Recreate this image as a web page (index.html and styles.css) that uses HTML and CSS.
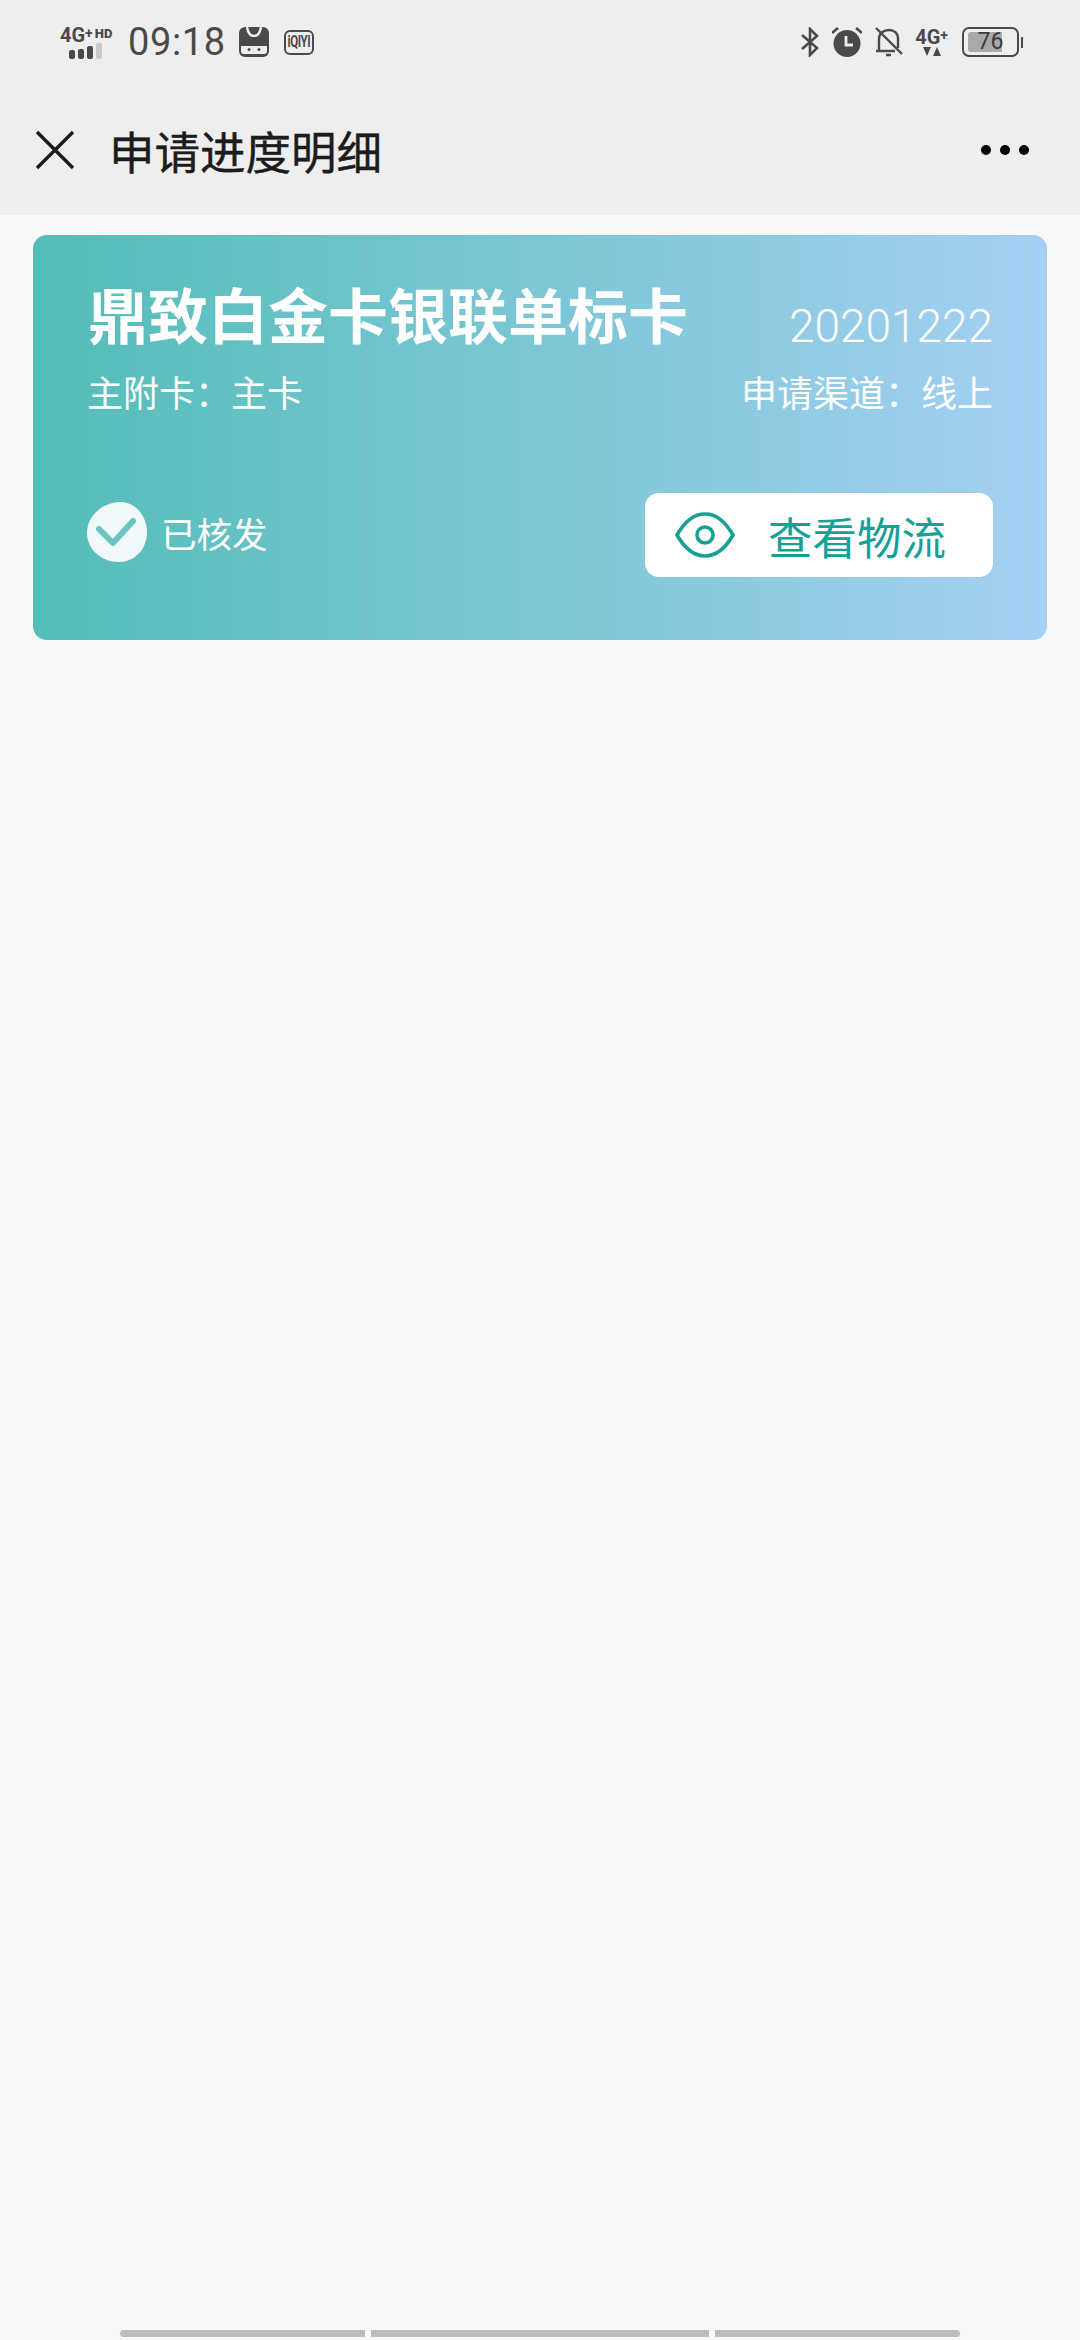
FILE: index.html
```html
<!DOCTYPE html>
<html lang="zh-CN">
<head>
    <meta charset="UTF-8">
    <meta name="viewport" content="width=device-width, initial-scale=1.0">
    <title>申请进度明细</title>
    <link rel="stylesheet" href="styles.css">
</head>
<body>
    <div class="page">
        <!-- 顶部 -->
        <div class="top-bar">
            <div class="status-bar">
                <div class="status-left">
                    <div class="signal">
                        <div class="net-text">4G<sup>+</sup><b>HD</b></div>
                        <div class="bars"><i></i><i></i><i></i><i class="off"></i></div>
                    </div>
                    <span class="clock">09:18</span>
                    <svg class="tmall" width="30" height="30" viewBox="0 0 30 30">
                        <rect width="30" height="30" rx="6" fill="#4a4a4a"/>
                        <path d="M8 0 C9 6 12 9 15 9 C18 9 21 6 22 0" fill="none" stroke="#eee" stroke-width="2.4"/>
                        <path d="M2 13 L7 16 L23 16 L28 13 L28 24 Q28 27 25 27 L5 27 Q2 27 2 24 Z" fill="#eee"/>
                        <rect x="0" y="10" width="30" height="9" fill="#4a4a4a"/>
                        <rect x="3" y="19" width="24" height="7" rx="2" fill="#eee"/>
                        <circle cx="10" cy="22.5" r="1.5" fill="#4a4a4a"/>
                        <circle cx="20" cy="22.5" r="1.5" fill="#4a4a4a"/>
                    </svg>
                    <div class="iqiyi"><span>iQIYI</span></div>
                </div>
                <div class="status-right">
                    <svg class="ic-bt" width="20" height="30" viewBox="0 0 20 30" fill="none" stroke="#4a4a4a" stroke-width="2.6">
                        <path d="M2 8 L17 21 L10 28 L10 2 L17 9 L2 22"/>
                    </svg>
                    <svg class="ic-alarm" width="30" height="30" viewBox="0 0 30 30">
                        <circle cx="15" cy="16.5" r="13.5" fill="#4a4a4a"/>
                        <path d="M14 9 V18 H21" fill="none" stroke="#eee" stroke-width="2.8"/>
                        <path d="M0 6 L6 1 M30 6 L24 1" stroke="#4a4a4a" stroke-width="2.6"/>
                    </svg>
                    <svg class="ic-bell" width="28" height="30" viewBox="0 0 28 30" fill="none" stroke="#4a4a4a" stroke-width="2.4">
                        <path d="M4 23 V12 C4 6 9 3 14 3 C19 3 23 6 23 12 V21"/>
                        <path d="M1 24 H20 M11 28 H16 M1 1 L27 27"/>
                    </svg>
                    <div class="net-small">
                        <div>4G<sup>+</sup></div>
                        <svg width="18" height="9" viewBox="0 0 18 9" fill="#4a4a4a"><path d="M0 0 H8 L4 9 Z M10 9 H18 L14 0 Z"/></svg>
                    </div>
                    <div class="battery">
                        <div class="battery-body">
                            <div class="battery-level" style="width: 76%"></div>
                            <span>76</span>
                        </div>
                        <div class="battery-cap"></div>
                    </div>
                </div>
            </div>
            <div class="nav-bar">
                <svg class="close-icon" width="40" height="40" viewBox="0 0 40 40" fill="none" stroke="#1c1c1c" stroke-width="3.4">
                    <path d="M2 2 L38 38 M38 2 L2 38"/>
                </svg>
                <h1>申请进度明细</h1>
                <div class="more"><i></i><i></i><i></i></div>
            </div>
        </div>

        <!-- 卡片 -->
        <div class="card">
            <div class="card-row card-title-row">
                <h2>鼎致白金卡银联单标卡</h2>
                <span class="card-date">20201222</span>
            </div>
            <div class="card-row card-sub">
                <span>主附卡：主卡</span>
                <span>申请渠道：线上</span>
            </div>
            <div class="card-row card-bottom">
                <div class="card-status">
                    <svg width="60" height="60" viewBox="0 0 60 60">
                        <path d="M32 0 C47 -1 60 13 60 30 C60 48 47 60 32 60 C14 60 0 47 0 31 C0 14 15 1 32 0 Z" fill="#f0f9fa"/>
                        <path d="M12 27 L26 41 L46 19" fill="none" stroke="#6cc3c3" stroke-width="6" stroke-linecap="round" stroke-linejoin="round"/>
                    </svg>
                    <span>已核发</span>
                </div>
                <div class="logistics-btn">
                    <svg width="60" height="46" viewBox="0 0 60 46" fill="none" stroke="#16a096" stroke-width="3.6">
                        <path d="M2 23 C10 9 20 2 30 2 C40 2 50 9 58 23 C50 37 40 44 30 44 C20 44 10 37 2 23 Z"/>
                        <circle cx="30" cy="23" r="8"/>
                    </svg>
                    <span>查看物流</span>
                </div>
            </div>
        </div>

        <!-- 底部横条 -->
        <div class="bottom-bars">
            <i class="bar-first"></i>
            <i class="bar-mid"></i>
            <i class="bar-last"></i>
        </div>
    </div>
</body>
</html>
```

FILE: styles.css
```css
body {
    margin: 0;
    padding: 0;
    background: #f9f9f9;
    font-family: "Noto Sans CJK SC", Roboto, sans-serif;
    overflow: hidden;
}

.page {
    display: flex;
    flex-direction: column;
    height: 2340px;
}

.top-bar {
    background: #eeeeee;
    height: 215px;
    flex-shrink: 0;
}

.status-bar {
    display: flex;
    justify-content: space-between;
    align-items: center;
    height: 84px;
    padding: 0 57px 0 60px;
    color: #4a4a4a;
    font-family: Roboto, sans-serif;
}

.status-left,
.status-right {
    display: flex;
    align-items: center;
}

.signal {
    width: 56px;
    margin-right: 12px;
}

.net-text {
    font-size: 20px;
    font-weight: 700;
    line-height: 16px;
    white-space: nowrap;
}

.net-text sup,
.net-small sup {
    font-size: 14px;
    line-height: 0;
    vertical-align: 4px;
}

.net-text b {
    font-size: 13px;
    margin-left: 2px;
    vertical-align: 4px;
}

.bars {
    display: flex;
    align-items: flex-end;
    gap: 3px;
    margin: 0 0 0 9px;
}

.bars i {
    width: 6px;
    height: 9px;
    background: #4a4a4a;
    border-radius: 2px;
}

.bars i:nth-child(2) {
    height: 10px;
}

.bars i:nth-child(3) {
    height: 13px;
}

.bars i.off {
    height: 16px;
    background: #c8c8c8;
}

.clock {
    font-size: 38px;
    letter-spacing: 0.6px;
    margin-right: 13px;
}

.tmall {
    margin-right: 15px;
}

.iqiyi {
    display: flex;
    justify-content: center;
    align-items: center;
    box-sizing: border-box;
    width: 30px;
    height: 25px;
    border: 2px solid #4a4a4a;
    border-radius: 6px;
    overflow: hidden;
}

.iqiyi span {
    font-size: 16px;
    font-weight: 700;
    line-height: 20px;
    letter-spacing: -0.5px;
    transform: scaleX(0.72);
}

.status-right .ic-alarm {
    margin-left: 12px;
}

.status-right .ic-bell {
    margin-left: 13px;
}

.net-small {
    margin-left: 12px;
    font-size: 20px;
    font-weight: 700;
    line-height: 17px;
    text-align: center;
    white-space: nowrap;
}

.net-small svg {
    display: block;
    margin: 1px auto 0;
}

.battery {
    display: flex;
    align-items: center;
    margin-left: 14px;
}

.battery-body {
    position: relative;
    box-sizing: border-box;
    width: 57px;
    height: 30px;
    border: 2px solid #4a4a4a;
    border-radius: 7px;
    padding: 3px 4px;
}

.battery-level {
    height: 100%;
    background: #a9a9a9;
    border-radius: 3px 0 0 3px;
}

.battery-body span {
    position: absolute;
    top: 0;
    left: 0;
    right: 0;
    font-size: 23px;
    line-height: 26px;
    text-align: center;
    color: #3c3c3c;
}

.battery-cap {
    width: 2px;
    height: 11px;
    margin-left: 2px;
    background: #4a4a4a;
}

.nav-bar {
    display: flex;
    align-items: center;
    height: 131px;
    padding: 0 51px 0 35px;
}

.close-icon {
    flex-shrink: 0;
    margin-right: 34px;
}

.nav-bar h1 {
    flex: 1;
    margin: 0;
    font-size: 45.5px;
    font-weight: 400;
    color: #1c1c1c;
    -webkit-text-stroke: 0.4px #1c1c1c;
}

.more {
    display: flex;
    gap: 9px;
}

.more i {
    width: 10px;
    height: 10px;
    background: #000000;
    border-radius: 50%;
}

.card {
    box-sizing: border-box;
    height: 405px;
    margin: 20px 33px 0;
    padding: 38px 54px 0 54px;
    border-radius: 14px;
    background: linear-gradient(90deg, #53bdb7, #a5d0f3);
    color: #ffffff;
}

.card-row {
    display: flex;
    justify-content: space-between;
}

.card-title-row {
    align-items: flex-end;
    height: 80px;
}

.card-title-row h2 {
    margin: 0 0 0 1px;
    font-size: 60px;
    font-weight: 700;
    line-height: 80px;
}

.card-date {
    font-family: Roboto, sans-serif;
    font-size: 46px;
    font-weight: 300;
    line-height: 54px;
}

.card-sub {
    margin-top: 13px;
    font-size: 36px;
    line-height: 50px;
}

.card-bottom {
    align-items: center;
    margin-top: 77px;
    height: 84px;
}

.card-status {
    display: flex;
    align-items: center;
    gap: 14px;
    margin-top: -6px;
    font-size: 35.5px;
}

.logistics-btn {
    display: flex;
    align-items: center;
    gap: 33px;
    box-sizing: border-box;
    width: 348px;
    height: 84px;
    padding-left: 30px;
    background: #ffffff;
    border-radius: 14px;
    color: #16a096;
    font-size: 44.5px;
}

.bottom-bars {
    display: flex;
    gap: 6px;
    margin-top: auto;
    margin-bottom: 3px;
    padding: 0 120px;
}

.bottom-bars i {
    height: 7px;
    background: #bcbcbc;
}

.bar-first {
    width: 245px;
    border-radius: 4px 0 0 4px;
}

.bar-mid {
    width: 338px;
}

.bar-last {
    width: 245px;
    border-radius: 0 4px 4px 0;
}
```
